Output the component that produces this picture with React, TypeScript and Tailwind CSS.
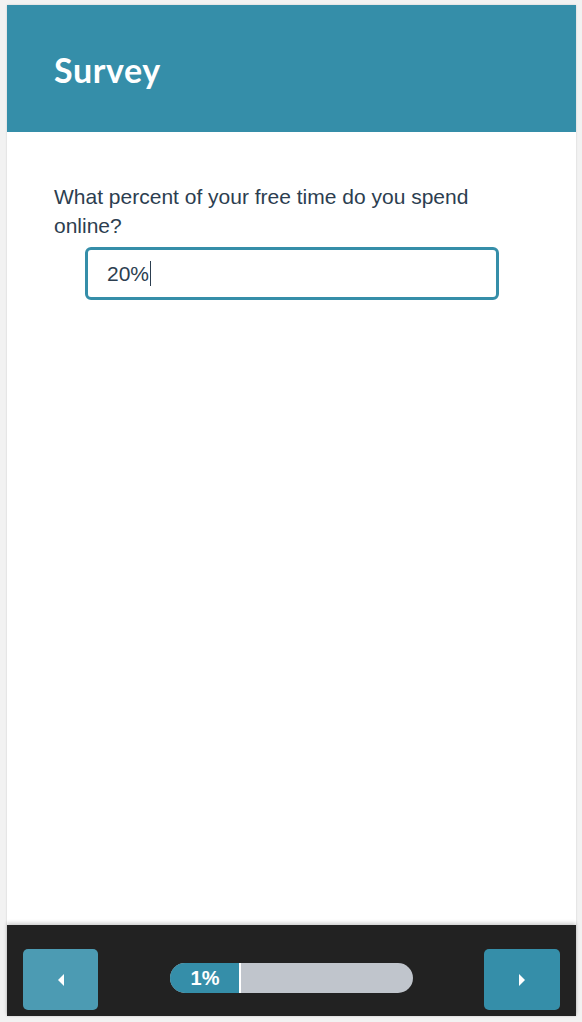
import React from "react";

export default function App() {
  return (
    <div className="h-[1022px] w-[582px] bg-[#f2f2f2] pt-[5px] pl-[7px] overflow-hidden" style={{ fontFamily: '"Liberation Sans", Arial, sans-serif' }}>
      <div className="flex h-[1011px] w-[569px] flex-col bg-white shadow-[0_0_2px_rgba(0,0,0,0.15)]">
        {/* header */}
        <header className="flex h-[127px] items-center bg-[#358ea9] pl-[47px]">
          <h1 className="mt-[2px] text-[34px] font-bold text-white tracking-[0.6px]" style={{ fontFamily: 'Lato, "Open Sans", sans-serif' }}>
            Survey
          </h1>
        </header>

        {/* question */}
        <main className="flex-1 px-[47px] pt-[50px]">
          <p className="text-[21px] leading-[29px] text-[#2c3e50]">
            What percent of your free time do you spend online?
          </p>
          <div className="ml-[31px] mt-[7px] flex h-[53px] w-[414px] items-center rounded-[6px] border-[3px] border-[#358ea9] pl-[19px]">
            <span className="text-[21px] text-[#2c3e50]">20%</span>
            <span className="ml-[1px] h-[25px] w-[1px] bg-[#2c3e50]" />
          </div>
        </main>

        {/* footer nav */}
        <footer className="flex h-[91px] items-start justify-between bg-[#222222] px-[16px] pt-[24px] shadow-[0_-2px_4px_rgba(0,0,0,0.2)]">
          <button className="flex h-[61px] w-[75px] items-center justify-center rounded-[5px] bg-[#4c9bb3]">
            <svg width="8" height="12" viewBox="0 0 8 12">
              <path d="M7 0 L1 6 L7 12 Z" fill="white" />
            </svg>
          </button>
          <div className="mt-[14px] flex h-[30px] w-[243px] overflow-hidden rounded-full bg-[#c0c5cc]">
            <div className="flex h-full w-[71px] items-center justify-center border-r-[2px] border-white bg-[#358ea9] pl-[2px]">
              <span className="text-[20px] font-bold text-white">1%</span>
            </div>
          </div>
          <button className="flex h-[61px] w-[76px] items-center justify-center rounded-[5px] bg-[#358ea9]">
            <svg width="8" height="12" viewBox="0 0 8 12">
              <path d="M1 0 L7 6 L1 12 Z" fill="white" />
            </svg>
          </button>
        </footer>
      </div>
    </div>
  );
}
